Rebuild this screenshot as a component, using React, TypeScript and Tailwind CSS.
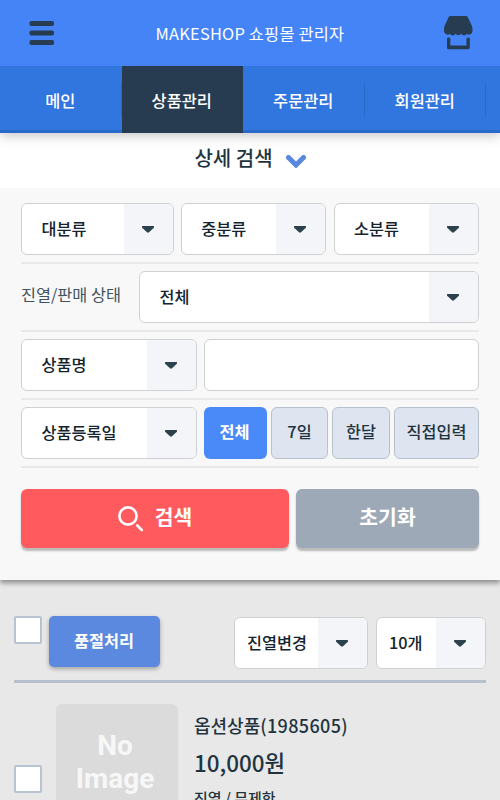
import clsx from 'clsx';

const tabs = ['메인', '상품관리', '주문관리', '회원관리'];

export default function App() {
  return (
    <div className="h-[800px] w-[500px] overflow-hidden bg-[#e8e8e8] font-['Noto_Sans_CJK_KR','Noto_Sans',sans-serif] text-[#1f343f]">
      <Header />
      <Tabs />
      <SearchPanel />
      <ProductList />
    </div>
  );
}

const Header = () => {
  return (
    <header className="relative z-20 flex h-[66px] items-center justify-between bg-[#4584f7] pr-[27px] pl-[29px]">
      <button aria-label="메뉴">
        <MenuIcon />
      </button>
      <h1 className="pl-[3px] text-[16.4px] tracking-[0.2px] whitespace-nowrap text-white">MAKESHOP 쇼핑몰 관리자</h1>
      <button aria-label="상점">
        <StoreIcon />
      </button>
    </header>
  );
};

const Tabs = () => {
  return (
    <nav className="relative z-10 flex h-[67px] bg-linear-to-t from-[#286acc] from-[3px] to-[#3175de] to-[3px] shadow-[0_2px_12px_rgba(0,0,0,0.25)]">
      {tabs.map((tab) => (
        <a
          key={tab}
          className={clsx(
            'flex w-[121.5px] shrink-0 items-center justify-center pt-[2px] pr-px text-[16.4px] font-medium text-white',
            tab === '상품관리' ? 'bg-[#273c50]' : TabDividerClassName,
          )}
        >
          {tab}
        </a>
      ))}
    </nav>
  );
};

const SearchPanel = () => {
  return (
    <section className="bg-[#f8f8f8] pb-8 shadow-[0_3px_5px_rgba(0,0,0,0.4)]">
      <div className="flex h-[55px] items-center justify-center gap-[13px] bg-white pb-[6px] text-[20px] font-medium">
        상세 검색
        <ChevronIcon />
      </div>
      <div className="px-[21px] pt-2">
        <div className={RowClassName}>
          <Select label="대분류" className="w-[152.5px] pl-[19.5px]" />
          <Select label="중분류" className="w-[145.5px] pl-[19.5px]" />
          <Select label="소분류" className="w-[145.5px] pl-[19.5px]" />
        </div>
        <div className={RowClassName}>
          <span className="pb-[6px] text-[16.3px] whitespace-nowrap text-[#41525c]">진열/판매 상태</span>
          <Select label="전체" className="w-[340px] pl-[19.5px]" />
        </div>
        <div className={RowClassName}>
          <Select label="상품명" className="w-[176px] pl-[19.5px]" />
          <input className="h-[52px] w-[275px] rounded-md border border-[#cfd0d1] bg-white px-3" />
        </div>
        <div className={RowClassName}>
          <Select label="상품등록일" className="w-[176px] pl-[19.5px]" />
          <div className="flex h-[52px] w-[275px] justify-between text-[16.3px] font-medium">
            <button className="w-[63px] rounded-md bg-[#4a89f8] pr-[2px] pb-[3px] font-bold text-white">전체</button>
            <button className={clsx(PeriodClassName, 'w-[57px]')}>7일</button>
            <button className={clsx(PeriodClassName, 'w-[58px]')}>한달</button>
            <button className={clsx(PeriodClassName, 'w-[85px]')}>직접입력</button>
          </div>
        </div>
        <div className="mt-[21px] flex h-[59px] justify-between text-[20.4px] font-bold text-white">
          <button className="flex w-[268px] items-center justify-center gap-[11px] rounded-md bg-[#ff5b5e] pb-[4px] shadow-[0_3px_2px_rgba(0,0,0,0.25)]">
            <SearchIcon />
            검색
          </button>
          <button className="w-[183px] rounded-md bg-[#9ea9b7] pb-[4px] shadow-[0_3px_2px_rgba(0,0,0,0.25)]">
            초기화
          </button>
        </div>
      </div>
    </section>
  );
};

const ProductList = () => {
  return (
    <section className="px-[14px] pt-9">
      <div className="flex h-[67px] border-b-3 border-[#b7c1cd]">
        <Checkbox />
        <button className="ml-[7px] h-[51px] w-[111px] rounded-[5px] bg-[#5b89df] pr-px pb-[3px] text-[16.3px] font-bold text-white shadow-[0_2px_4px_rgba(0,0,0,0.3)]">
          품절처리
        </button>
        <Select label="진열변경" className="mt-px ml-auto w-[134.5px] pl-[12.5px]" />
        <Select label="10개" className="mt-px ml-[7.5px] w-[110.5px] pl-[12.5px]" />
      </div>
      <div className="flex pt-[21px]">
        <div className="pt-[61px]">
          <Checkbox />
        </div>
        <div className="ml-[14px] h-[122px] w-[122px] shrink-0 rounded-md bg-[#dbdbdb] pt-[25px] pr-1 text-center font-[Roboto,'Noto_Sans_CJK_KR',sans-serif] text-[28px] leading-[33px] font-bold text-[#f7f7f7]">
          No
          <br />
          Image
        </div>
        <div className="ml-4 whitespace-nowrap">
          <p className="mt-[6px] text-[18px] leading-[30px] font-medium">
            옵션상품<span className="tracking-[0.35px]">(1985605)</span>
          </p>
          <p className="mt-[5px] text-[22.4px] leading-[34px] font-medium">10,000원</p>
          <p className="mt-[7px] text-[15px] leading-[24px] font-medium">진열 / 무제한</p>
        </div>
      </div>
    </section>
  );
};

const Select = ({ label, className }: { label: string; className: string }) => {
  return (
    <button
      className={clsx(
        'flex h-[52px] shrink-0 items-center justify-between overflow-hidden rounded-md border border-[#cfd0d1] bg-white text-[16.3px] font-medium whitespace-nowrap text-[#14232e]',
        className,
      )}
    >
      <span className="pb-px">{label}</span>
      <span className="flex h-full w-[49px] shrink-0 items-center justify-center bg-[#f4f5f8] pr-px">
        <CaretIcon />
      </span>
    </button>
  );
};

const Checkbox = () => {
  return <span className="block h-7 w-7 shrink-0 rounded-[2px] border-2 border-[#b7c3d0] bg-white" />;
};

const MenuIcon = () => (
  <svg width="25" height="26" viewBox="0 0 25 26" fill="#273c50">
    <rect x="0.5" y="1" width="24.5" height="5" rx="1.8" />
    <rect x="0.5" y="10.5" width="24.5" height="5" rx="1.8" />
    <rect x="0.5" y="20" width="24.5" height="5" rx="1.8" />
  </svg>
);

const StoreIcon = () => (
  <svg width="30" height="34" viewBox="0 0 30 34" fill="#273c50">
    <path d="M7.3 0h15.8q1 0 1.6 1l4 8.5q.8 1.8.8 3.6v2.2a3.4 3.4 0 0 1-5.6 2.5 3.2 3.2 0 0 1-5.6 0 3.6 3.6 0 0 1-5.8 0 3.2 3.2 0 0 1-5.6 0A3.6 3.6 0 0 1 1 15.3v-2.2q0-1.8.8-3.6L5.7 1Q6.3 0 7.3 0Z" />
    <path d="M4 22.4q0-1 1.7-1t1.6 1v7h16.2v-7q0-1 1.6-1t1.7 1v9.4q0 1.4-1.4 1.4h-20Q4 33.2 4 31.8Z" />
  </svg>
);

const ChevronIcon = () => (
  <svg className="mt-[8px]" width="20" height="13" viewBox="0 0 20 13">
    <path d="m2.5 2.5 7.5 7.5 7.5-7.5" fill="none" stroke="#5988df" strokeWidth="5" strokeLinecap="round" />
  </svg>
);

const CaretIcon = () => (
  <svg width="12" height="7" viewBox="0 0 12 7" fill="#2b414c">
    <path d="M.5 0h11q.5 0 .5.5v.7q0 .5-.4.9L7 6.3Q6 7.2 5 6.3L.4 2.1Q0 1.7 0 1.2V.5Q0 0 .5 0Z" />
  </svg>
);

const SearchIcon = () => (
  <svg className="mt-[5px]" width="26" height="26" viewBox="0 0 26 26" fill="none" stroke="#fff">
    <circle cx="10" cy="10" r="8.6" strokeWidth="2.6" />
    <path d="m19.3 19.5 4.500 4.500" strokeWidth="2.6" strokeLinecap="round" />
  </svg>
);

const TabDividerClassName =
  "relative after:absolute after:top-[17px] after:right-0 after:h-[33px] after:w-px after:bg-[#286acc] after:content-['']";
const RowClassName = 'flex h-[68px] items-center justify-between border-b-2 border-[#e9e9ea]';
const PeriodClassName = 'rounded-md border border-[#b8c1c9] bg-[#dee4f0] pb-[3px]';
